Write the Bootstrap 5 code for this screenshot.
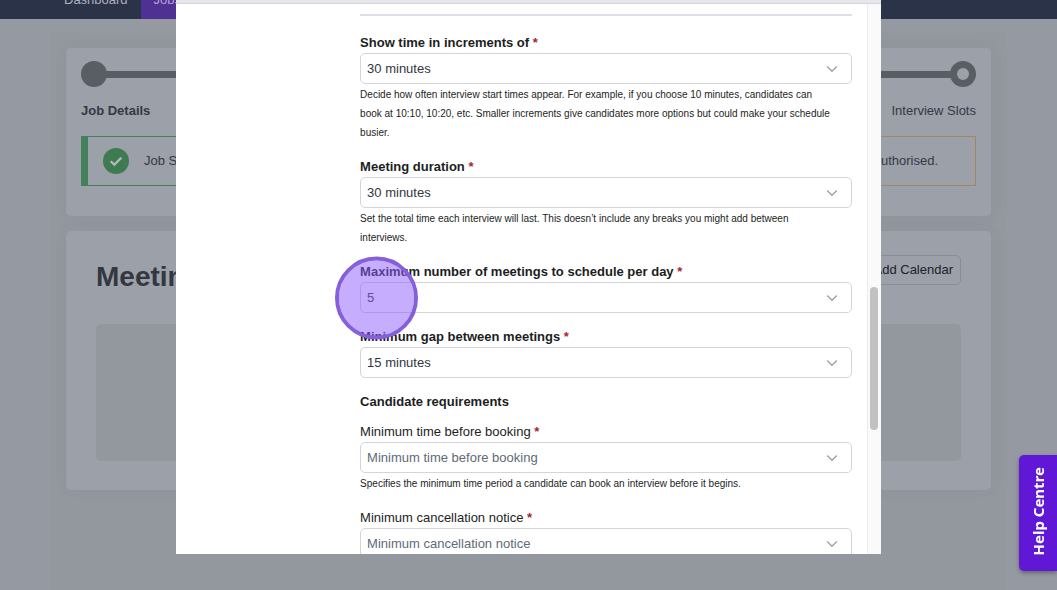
<!DOCTYPE html>
<html lang="en">
<head>
<meta charset="utf-8">
<meta name="viewport" content="width=device-width, initial-scale=1">
<title>Interview slots</title>
<link href="https://cdn.jsdelivr.net/npm/bootstrap@5.3.0/dist/css/bootstrap.min.css" rel="stylesheet">
<style>
  body {
    font: 13px/20px "Liberation Sans", Arial, sans-serif;
    color: #343946;
    background: #959aa2;
    min-height: 100vh;
    overflow: hidden;
  }
  .topbar { height: 19px; padding-left: 51px; background: #2b3349; }
  .topbar a { padding: 9px 13px; color: #aeb2bc; text-decoration: none; }
  .topbar a.active { background: #4f3093; color: #b3a2d6; }
  .page { margin: 13px 50px 0; padding: 16px; background: #93989f; min-height: calc(100vh - 32px); }
  .panel { background: #9ba0a9; border-radius: 5px; padding: 13px 15px 30px; box-shadow: 0 0 15px rgba(80, 84, 92, .05); }
  .panel + .panel { margin-top: 15px; padding: 24px 30px 29px; }
  .dot { width: 26px; height: 26px; border-radius: 50%; background: #595e65; }
  .dot.hollow { background: transparent; border: 7px solid #595e65; }
  .rail { height: 7px; margin: 0 -1px; background: #595e65; }
  .steps { margin: 14px 0 15px; }
  .notice { height: 50px; border: 1px solid #44805a; }
  .notice.ok { border-left-width: 7px; padding-left: 15px; gap: 15px; }
  .notice.warn { border-color: #9f8763; padding-right: 37px; }
  .title { font-size: 28px; line-height: 44px; font-weight: 700; color: #333740; }
  .btn-cal { font-size: 13px; line-height: 20px; padding: 4px 7px; border: 1px solid #878c95; color: #1e222b; border-radius: 5px; }
  .well { height: 137px; margin-top: 25px; background: #93989f; border-radius: 5px; }

  .sheet { position: fixed; inset: 0 16.67% 36px; background: #fff; color: #1c1e22; z-index: 10; }
  .sheet-head { height: 4px; background: #e6e6eb; border-bottom: 1px solid #d5d6da; }
  .sheet-body { padding-right: 15px; min-height: 0; overflow: hidden; }
  .fields { padding-left: 15px; }
  .rule { border-top: 2px solid #dfe0e3; margin: 10px 0 17px; }
  .field { margin-bottom: 14px; }
  .field label, .group-title { display: block; font-size: 13px; line-height: 20px; }
  .group-title { font-weight: 700; margin: 0 0 10px; }
  .req { color: #a5272d; font-weight: 700; }
  .form-select {
    height: 31px; padding: 4px 30px 4px 6px;
    font-size: 13px; line-height: 21px; color: #32363e;
    border: 1px solid #d3d5d9; border-radius: 5px;
    background-image: url("data:image/svg+xml,%3Csvg xmlns='http://www.w3.org/2000/svg' viewBox='0 0 12 8'%3E%3Cpath d='M1.2 1.5 6 6.3l4.8-4.8' fill='none' stroke='%239da1a6' stroke-width='1.3'/%3E%3C/svg%3E");
    background-size: 12px 8px; background-position: right 13px center;
  }
  .form-select.empty { color: #5f6a78; }
  .hint { font-size: 10px; line-height: 19px; padding: 1px 0; white-space: nowrap; }
  .spot {
    position: absolute; left: -25px; top: 50%; width: 83px; height: 83px;
    transform: translateY(-50%); border-radius: 50%;
    background: rgba(141, 91, 251, .5); border: 4px solid #865fdb; background-clip: padding-box; pointer-events: none;
  }
  .track { width: 14px; background: #fafafa; border-left: 1px solid #ececee; }
  .thumb { width: 8px; height: 26%; border-radius: 4px; background: #c1c1c1; }
  .help {
    position: fixed; right: 0; bottom: 19px; z-index: 20; width: 38px; height: 116px; padding: 0;
    border: 0; border-radius: 5px 0 0 5px; background: #6118d6; color: #fff;
    font: 700 15px/20px "Noto Sans", "Open Sans", sans-serif; box-shadow: 0 2px 4px rgba(0, 0, 0, .35);
  }
  .help span { display: inline-block; writing-mode: vertical-rl; transform: rotate(180deg); }
</style>
</head>
<body>
<nav class="topbar d-flex align-items-end overflow-hidden">
  <a href="#">Dashboard</a>
  <a href="#" class="active">Jobs</a>
</nav>

<main class="page">
  <section class="panel">
    <div class="d-flex align-items-center">
      <span class="dot"></span><span class="rail flex-grow-1"></span><span class="dot hollow"></span>
    </div>
    <div class="steps d-flex justify-content-between">
      <strong>Job Details</strong><span>Interview Slots</span>
    </div>
    <div class="row gx-3">
      <div class="col-6">
        <div class="notice ok d-flex align-items-center">
          <svg width="26" height="26" viewBox="0 0 26 26" aria-hidden="true"><circle cx="13" cy="13" r="13" fill="#3f7b50"/><path d="M7.8 13.2l3.5 3.5 7-7" fill="none" stroke="#b4bbc0" stroke-width="2.3"/></svg>
          <span>Job Saved</span>
        </div>
      </div>
      <div class="col-6">
        <div class="notice warn d-flex align-items-center justify-content-end">authorised.</div>
      </div>
    </div>
  </section>

  <section class="panel">
    <div class="d-flex justify-content-between align-items-start">
      <h1 class="title m-0">Meetings</h1>
      <button type="button" class="btn btn-cal">Add Calendar</button>
    </div>
    <div class="well"></div>
  </section>
</main>

<div class="sheet d-flex flex-column" role="dialog" aria-label="Meeting settings">
  <div class="sheet-head flex-shrink-0"></div>
  <div class="d-flex flex-grow-1 overflow-hidden">
    <form class="sheet-body flex-grow-1">
      <div class="row g-0 justify-content-end">
        <div class="col-9 fields">
          <div class="rule"></div>
          <div class="field">
            <label class="fw-bold" for="increments">Show time in increments of <span class="req">*</span></label>
            <select class="form-select" id="increments"><option>30 minutes</option></select>
            <div class="hint">Decide how often interview start times appear. For example, if you choose 10 minutes, candidates can<br>book at 10:10, 10:20, etc. Smaller increments give candidates more options but could make your schedule<br>busier.</div>
          </div>
          <div class="field">
            <label class="fw-bold" for="duration">Meeting duration <span class="req">*</span></label>
            <select class="form-select" id="duration"><option>30 minutes</option></select>
            <div class="hint">Set the total time each interview will last. This doesn’t include any breaks you might add between<br>interviews.</div>
          </div>
          <div class="field">
            <label class="fw-bold" for="maximum">Maximum number of meetings to schedule per day <span class="req">*</span></label>
            <div class="position-relative">
              <select class="form-select" id="maximum"><option>5</option></select>
              <span class="spot"></span>
            </div>
          </div>
          <div class="field">
            <label class="fw-bold" for="gap">Minimum gap between meetings <span class="req">*</span></label>
            <select class="form-select" id="gap"><option>15 minutes</option></select>
          </div>
          <h2 class="group-title">Candidate requirements</h2>
          <div class="field">
            <label for="before">Minimum time before booking <span class="req">*</span></label>
            <select class="form-select empty" id="before"><option>Minimum time before booking</option></select>
            <div class="hint">Specifies the minimum time period a candidate can book an interview before it begins.</div>
          </div>
          <div class="field">
            <label for="notice">Minimum cancellation notice <span class="req">*</span></label>
            <select class="form-select empty" id="notice"><option>Minimum cancellation notice</option></select>
          </div>
        </div>
      </div>
    </form>
    <div class="track d-flex flex-column align-items-center flex-shrink-0">
      <div class="h-50"></div>
      <div class="thumb mt-2"></div>
    </div>
  </div>
</div>

<button type="button" class="help"><span>Help Centre</span></button>
<script src="https://cdn.jsdelivr.net/npm/bootstrap@5.3.0/dist/js/bootstrap.bundle.min.js"></script>
</body>
</html>
